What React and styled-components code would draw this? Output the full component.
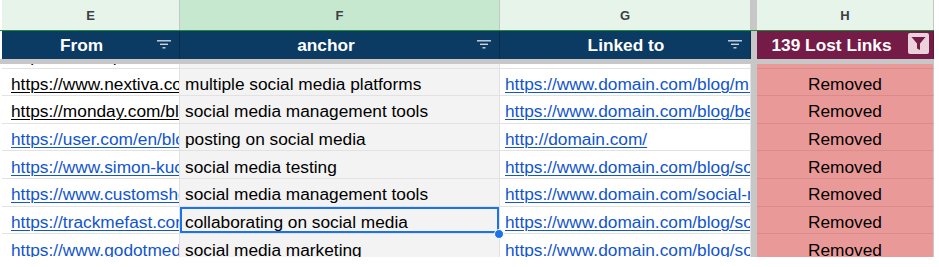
import React from "react";
import styled, { createGlobalStyle } from "styled-components";

const GlobalStyle = createGlobalStyle`
  html, body { margin: 0; padding: 0; background: #ffffff; }
  body { font-family: "Liberation Sans", Arial, sans-serif; }
`;

const COLS = { E: 178, F: 320, G: 251, H: 177 };
const ROW_H = 27.67;

const Sheet = styled.div`
  width: 939px;
  height: 267px;
  overflow: hidden;
  background: #ffffff;
`;

const Line = styled.div`
  display: flex;
  width: 939px;
  height: ${(p) => p.$h}px;
  box-sizing: border-box;
  flex: none;
`;

const LetterLine = styled(Line)`
  height: 31px;
  border-bottom: 1px solid #1f8a3e;
  width: 934px;
`;

const Gutter = styled.div`
  flex: none;
  width: 2px;
  background: #ffffff;
`;

const Freeze = styled.div`
  flex: none;
  width: 6px;
  background: #c7c7c7;
`;

const Letter = styled.div`
  flex: none;
  width: ${(p) => p.$w}px;
  box-sizing: border-box;
  border-right: 1px solid #c4c7c5;
  background: ${(p) => (p.$active ? "#c5e8cf" : "#e6f4ea")};
  display: flex;
  align-items: center;
  justify-content: center;
  padding-top: 1px;
  font-size: 13px;
  font-weight: 700;
  color: #3c4043;
`;

const HeadCell = styled.div`
  position: relative;
  flex: none;
  width: ${(p) => p.$w}px;
  height: 28px;
  box-sizing: border-box;
  border-right: 1px solid ${(p) => (p.$tone === "purple" ? "#5d1538" : "#082d4d")};
  background: ${(p) => (p.$tone === "purple" ? "#741b47" : "#0b3a63")};
  color: #ffffff;
  font-size: 17.3px;
  font-weight: 700;
  display: flex;
  align-items: center;
  justify-content: center;
  padding-top: 1px;
  padding-right: ${(p) => p.$pr || 0}px;
  padding-left: ${(p) => p.$pl || 0}px;
  white-space: nowrap;
`;

const FilterLines = styled.svg`
  position: absolute;
  right: 8px;
  top: 9px;
  width: 14px;
  height: 9px;
`;

const FilterButton = styled.div`
  position: absolute;
  right: 4px;
  top: 2px;
  width: 21px;
  height: 21px;
  border-radius: 2px;
  background: #ead1dc;
  display: flex;
  align-items: center;
  justify-content: center;
`;

const Band = styled.div`
  width: 934px;
  height: 5px;
  background: #c7c7c7;
  flex: none;
`;

const Viewport = styled.div`
  height: 193px;
  overflow: hidden;
`;

const Scroller = styled.div`
  margin-top: ${(p) => p.$offset}px;
`;

const Row = styled.div`
  display: flex;
  height: ${ROW_H}px;
`;

const Cell = styled.div`
  position: relative;
  flex: none;
  width: ${(p) => p.$w}px;
  height: 100%;
  box-sizing: border-box;
  border-right: 1px solid ${(p) => (p.$tone === "pink" ? "#c9c9c9" : "#e2e2e2")};
  border-bottom: 1px solid ${(p) => (p.$tone === "pink" ? "#d98c8c" : "#e2e2e2")};
  background: ${(p) =>
    p.$tone === "pink" ? "#ea9999" : p.$tone === "gray" ? "#f3f3f3" : "#ffffff"};
  padding-left: ${(p) => p.$pl || 0}px;
  padding-top: 5px;
  display: flex;
  align-items: center;
  justify-content: ${(p) => (p.$center ? "center" : "flex-start")};
  font-size: 17.3px;
  color: #000000;
  z-index: ${(p) => (p.$selected ? 2 : "auto")};

  ${(p) =>
    p.$selected &&
    `
    &::after {
      content: "";
      position: absolute;
      inset: 0;
      border: 2px solid #1a73e8;
      pointer-events: none;
    }
  `}
`;

const Text = styled.span`
  display: block;
  min-width: 0;
  flex: 1 1 auto;
  overflow: hidden;
  white-space: nowrap;
  text-align: ${(p) => (p.$center ? "center" : "left")};
`;

const Link = styled.span`
  color: ${(p) => (p.$plain ? "#000000" : "#1155cc")};
  text-decoration: ${(p) => (p.$bare ? "none" : "underline")};
  text-underline-offset: 2px;
  text-decoration-thickness: 1px;
`;

const Handle = styled.span`
  position: absolute;
  right: -5px;
  bottom: -6px;
  width: 10px;
  height: 10px;
  box-sizing: border-box;
  border-radius: 50%;
  background: #1a73e8;
  border: 1px solid #ffffff;
  z-index: 3;
`;

const rows = [
  { e: "https://www.sproutsocial.com", plain: true, bare: true, f: "", g: "" },
  { e: "https://www.nextiva.com/blog/social-media", plain: true, f: "multiple social media platforms", g: "https://www.domain.com/blog/multiple" },
  { e: "https://monday.com/blog/marketing/", plain: true, f: "social media management tools", g: "https://www.domain.com/blog/best-tools" },
  { e: "https://user.com/en/blog/social-media", f: "posting on social media", g: "http://domain.com/" },
  { e: "https://www.simon-kucher.com/en/blog", f: "social media testing", g: "https://www.domain.com/blog/social-media" },
  { e: "https://www.customshow.com/blog/", f: "social media management tools", g: "https://www.domain.com/social-media-tools" },
  { e: "https://trackmefast.com/blog/social", f: "collaborating on social media", g: "https://www.domain.com/blog/social-media", selected: true },
  { e: "https://www.godotmedia.com/blog/", f: "social media marketing", g: "https://www.domain.com/blog/social-media" },
];

function FilterIcon() {
  return (
    <FilterLines viewBox="0 0 14 9">
      <g stroke="#cdd6e0" strokeWidth="1.4" strokeLinecap="butt">
        <line x1="0" y1="0.8" x2="14" y2="0.8" />
        <line x1="3" y1="4.3" x2="11" y2="4.3" />
        <line x1="5.5" y1="7.8" x2="8.5" y2="7.8" />
      </g>
    </FilterLines>
  );
}

function FunnelButton() {
  return (
    <FilterButton>
      <svg width="15" height="15" viewBox="0 0 15 15">
        <path d="M0.5 1 H14.5 L9 7.6 V14 L6 12.4 V7.6 Z" fill="#741b47" />
      </svg>
    </FilterButton>
  );
}

export default function App() {
  return (
    <>
      <GlobalStyle />
      <Sheet>
        <LetterLine>
          <Gutter />
          <Letter $w={COLS.E}>E</Letter>
          <Letter $w={COLS.F} $active>F</Letter>
          <Letter $w={COLS.G}>G</Letter>
          <Freeze />
          <Letter $w={COLS.H}>H</Letter>
        </LetterLine>
        <Line $h={28}>
          <Gutter />
          <HeadCell $w={COLS.E} $pr={18}>
            From
            <FilterIcon />
          </HeadCell>
          <HeadCell $w={COLS.F} $pr={27}>
            anchor
            <FilterIcon />
          </HeadCell>
          <HeadCell $w={COLS.G} $pl={2}>
            Linked to
            <FilterIcon />
          </HeadCell>
          <Freeze />
          <HeadCell $w={COLS.H} $tone="purple" $pr={27}>
            139 Lost Links
            <FunnelButton />
          </HeadCell>
        </Line>
        <Band />
        <Viewport>
          <Scroller $offset={-(ROW_H - 4.5)}>
            {rows.map((r, i) => (
              <Row key={i}>
                <Gutter />
                <Cell $w={COLS.E} $pl={9}>
                  <Text>
                    <Link $plain={r.plain} $bare={r.bare}>{r.e}</Link>
                  </Text>
                </Cell>
                <Cell $w={COLS.F} $pl={5} $tone="gray" $selected={r.selected}>
                  <Text>{r.f}</Text>
                  {r.selected && <Handle />}
                </Cell>
                <Cell $w={COLS.G} $pl={5}>
                  <Text>
                    <Link>{r.g}</Link>
                  </Text>
                </Cell>
                <Freeze />
                <Cell $w={COLS.H} $tone="pink" $center>
                  {!r.bare && <Text $center>Removed</Text>}
                </Cell>
              </Row>
            ))}
          </Scroller>
        </Viewport>
      </Sheet>
    </>
  );
}
